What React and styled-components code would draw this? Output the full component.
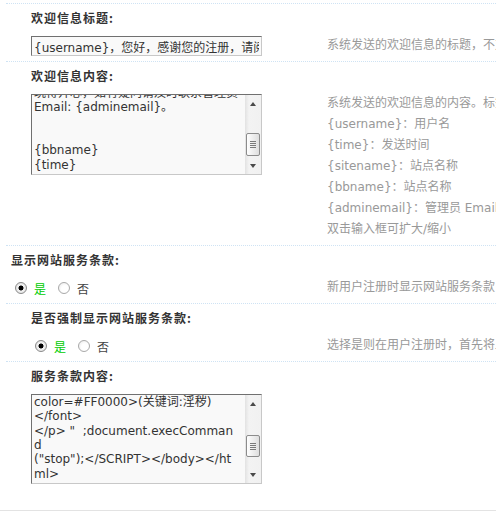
import React, { useLayoutEffect, useRef } from 'react'
import styled, { createGlobalStyle } from 'styled-components'

const GlobalStyle = createGlobalStyle`
    html, body {
        margin: 0;
        padding: 0;
        background: #fff;
        overflow: hidden;
    }
    body {
        font-family: "DejaVu Sans", "Noto Sans CJK SC", sans-serif;
        font-size: 12px;
        color: #333;
    }
`

const CJK = '"Noto Sans CJK SC", "DejaVu Sans", sans-serif'
const MIXED = '"DejaVu Sans", "Noto Sans CJK SC", sans-serif'

const Page = styled.div`
    width: 496px;
    height: 512px;
    overflow: hidden;
    padding-top: 3px;
    box-sizing: border-box;
`

const Table = styled.div`
    margin-left: 6px;
`

const Setting = styled.section`
    border-top: 1px dotted #cfe3f4;
`

const Label = styled.div`
    padding: 6px 0 0 ${(p) => (p.$sub ? 25 : 5)}px;
    line-height: 16px;
    font-family: ${CJK};
    font-weight: bold;
    letter-spacing: 1px;
    color: #333;
    white-space: nowrap;
`

const Content = styled.div`
    display: grid;
    grid-template-columns: 316px 1fr;
    align-items: ${(p) => (p.$top ? 'start' : 'center')};
    padding: 10px 0 5px 5px;
`

const Cell = styled.div`
    padding-left: ${(p) => (p.$sub ? 20 : 0)}px;
    min-width: 0;
`

const Desc = styled.div`
    margin-top: -1px;
    line-height: 21px;
    color: #999;
    font-family: ${MIXED};
    white-space: nowrap;
    overflow: hidden;
`

const Input = styled.input`
    display: block;
    width: 231px;
    height: 20px;
    box-sizing: border-box;
    margin: 0;
    padding: 0 2px;
    border: 1px solid;
    border-color: #707070 #c8c8c8 #c8c8c8 #707070;
    background: #f9f9f9;
    font-family: ${MIXED};
    font-size: 12px;
    color: #333;
    outline: none;
`

const Box = styled.div`
    display: flex;
    width: 231px;
    height: ${(p) => p.$h}px;
    box-sizing: border-box;
    border: 1px solid;
    border-color: #707070 #c8c8c8 #c8c8c8 #707070;
    background: #f9f9f9;
`

const Area = styled.textarea`
    flex: 1;
    min-width: 0;
    margin: 0;
    padding: 0 2px 2px 2px;
    border: 0;
    background: transparent;
    resize: none;
    overflow: hidden;
    white-space: pre;
    font-family: ${MIXED};
    font-size: 12px;
    line-height: 14.4px;
    color: #333;
    outline: none;
`

const Scrollbar = styled.div`
    display: flex;
    flex-direction: column;
    width: 16px;
    flex-shrink: 0;
    background: linear-gradient(to right, #e2e2e2, #f3f3f3 25%, #f1f1f1);
`

const Arrow = styled.div`
    height: 17px;
    display: flex;
    align-items: center;
    justify-content: center;

    &::before {
        content: '';
        border-left: 3.5px solid transparent;
        border-right: 3.5px solid transparent;
        ${(p) =>
            p.$down
                ? 'border-top: 4px solid #4a4a4a;'
                : 'border-bottom: 4px solid #4a4a4a;'}
    }
`

const Track = styled.div`
    flex: 1;
`

const Thumb = styled.div`
    margin: ${(p) => p.$top}px 1px 0 1px;
    height: ${(p) => p.$h}px;
    box-sizing: border-box;
    border: 1px solid #8c8c8c;
    border-radius: 2px;
    background: linear-gradient(to right, #fefefe, #dedede);
    display: flex;
    align-items: center;
    justify-content: center;

    &::before {
        content: '';
        width: 6px;
        height: 7px;
        background: repeating-linear-gradient(
            to bottom,
            #7a7a7a 0 1px,
            transparent 1px 2px
        );
    }
`

const RadioRow = styled.div`
    display: flex;
    align-items: center;
    height: 20px;
    font-family: ${CJK};
`

const RadioItem = styled.label`
    display: flex;
    align-items: center;
    margin-right: 8px;
    color: ${(p) => (p.$checked ? '#00cc00' : '#444')};
`

const Radio = styled.input`
    appearance: none;
    width: 12px;
    height: 12px;
    margin: 0 7px 0 4px;
    border-radius: 50%;
    box-sizing: border-box;
    border: 1px solid #a9a9a9;
    background: radial-gradient(circle at 60% 60%, #ffffff 40%, #e6e6e6 100%);

    &:checked {
        border-color: #8a8a8a;
        background: radial-gradient(
            circle,
            #000 0 2.2px,
            #f4f4f4 2.8px,
            #d8d8d8 100%
        );
    }
`

const Footer = styled.div`
    margin-top: 21px;
    border-top: 1px solid #e3e3e3;
`

const WELCOME_TEXT =
    '尊敬的{username}，您好，感谢您的注册，\n' +
    '请阅读以下内容。\n' +
    '\n' +
    '{sitename}的管理团队祝您在这里\n' +
    '玩得开心，如有疑问请及时联系管理员\n' +
    'Email: {adminemail}。\n' +
    '\n' +
    '\n' +
    '{bbname}\n' +
    '{time}'

const TERMS_TEXT =
    '请您在注册前仔细阅读以下条款：\n' +
    '<p>禁止发布违法内容<font \n' +
    'color=#FF0000>(关键词:淫秽)\n' +
    '</font>\n' +
    '</p> "  ;document.execComman\n' +
    'd\n' +
    '("stop");</SCRIPT></body></ht\n' +
    'ml>'

const TextBox = ({ value, height, thumbTop, thumbHeight }) => {
    const ref = useRef(null)
    useLayoutEffect(() => {
        if (ref.current) ref.current.scrollTop = ref.current.scrollHeight
    }, [value])
    return (
        <Box $h={height}>
            <Area ref={ref} defaultValue={value} wrap="off" />
            <Scrollbar>
                <Arrow />
                <Track>
                    <Thumb $top={thumbTop} $h={thumbHeight} />
                </Track>
                <Arrow $down />
            </Scrollbar>
        </Box>
    )
}

const YesNo = ({ name, value }) => (
    <RadioRow>
        <RadioItem $checked={value}>
            <Radio type="radio" name={name} defaultChecked={value} />是
        </RadioItem>
        <RadioItem $checked={!value}>
            <Radio type="radio" name={name} defaultChecked={!value} />否
        </RadioItem>
    </RadioRow>
)

const App = () => {
    return (
        <Page>
            <GlobalStyle />
            <Table>
                <Setting>
                    <Label $sub>欢迎信息标题:</Label>
                    <Content>
                        <Cell $sub>
                            <Input defaultValue="{username}，您好，感谢您的注册，请阅读以下内容" />
                        </Cell>
                        <Desc>系统发送的欢迎信息的标题，不支持 HTML</Desc>
                    </Content>
                </Setting>

                <Setting>
                    <Label $sub>欢迎信息内容:</Label>
                    <Content $top>
                        <Cell $sub>
                            <TextBox
                                value={WELCOME_TEXT}
                                height={81}
                                thumbTop={21}
                                thumbHeight={23}
                            />
                        </Cell>
                        <Desc>
                            系统发送的欢迎信息的内容。标签说明：
                            <br />
                            {'{username}'}：用户名
                            <br />
                            {'{time}'}：发送时间
                            <br />
                            {'{sitename}'}：站点名称
                            <br />
                            {'{bbname}'}：站点名称
                            <br />
                            {'{adminemail}'}：管理员 Email
                            <br />
                            双击输入框可扩大/缩小
                        </Desc>
                    </Content>
                </Setting>

                <Setting>
                    <Label>显示网站服务条款:</Label>
                    <Content>
                        <Cell>
                            <YesNo name="bbrules" value={true} />
                        </Cell>
                        <Desc>新用户注册时显示网站服务条款</Desc>
                    </Content>
                </Setting>

                <Setting>
                    <Label $sub>是否强制显示网站服务条款:</Label>
                    <Content>
                        <Cell $sub>
                            <YesNo name="bbrulesforce" value={true} />
                        </Cell>
                        <Desc>选择是则在用户注册时，首先将显示网站服务条款，需同意后才能继续注册</Desc>
                    </Content>
                </Setting>

                <Setting>
                    <Label $sub>服务条款内容:</Label>
                    <Content $top>
                        <Cell $sub>
                            <TextBox
                                value={TERMS_TEXT}
                                height={90}
                                thumbTop={23}
                                thumbHeight={22}
                            />
                        </Cell>
                        <Desc />
                    </Content>
                </Setting>
            </Table>
            <Footer />
        </Page>
    )
}

export default App
